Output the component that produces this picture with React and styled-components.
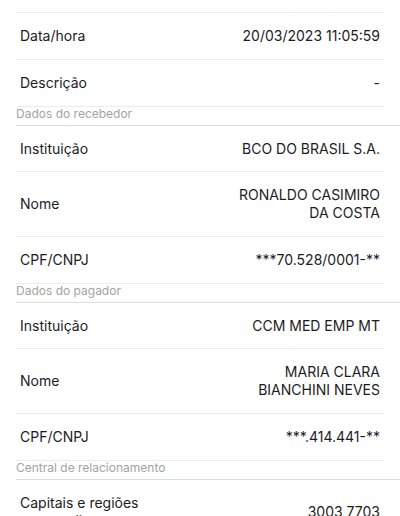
import React from "react";
import styled, { createGlobalStyle } from "styled-components";

const data = [
  {
    rows: [
      { label: "Data/hora", value: ["20/03/2023 11:05:59"] },
      { label: "Descrição", value: ["-"] },
    ],
  },
  {
    title: "Dados do recebedor",
    rows: [
      { label: "Instituição", value: ["BCO DO BRASIL S.A."] },
      { label: "Nome", value: ["RONALDO CASIMIRO", "DA COSTA"] },
      { label: "CPF/CNPJ", value: ["***70.528/0001-**"] },
    ],
  },
  {
    title: "Dados do pagador",
    rows: [
      { label: "Instituição", value: ["CCM MED EMP MT"] },
      { label: "Nome", value: ["MARIA CLARA", "BIANCHINI NEVES"] },
      { label: "CPF/CNPJ", value: ["***.414.441-**"] },
    ],
  },
  {
    title: "Central de relacionamento",
    rows: [
      { label: "Capitais e regiões metropolitanas", value: ["3003 7703"] },
    ],
  },
];

export default function App() {
  return (
    <Page>
      <GlobalStyle />
      <TopEdge />
      {data.map((group, i) => (
        <Group key={i}>
          {group.title && <GroupTitle>{group.title}</GroupTitle>}
          <List $titled={!!group.title}>
            {group.rows.map((row, j) => (
              <Row key={j}>
                <Label>{row.label}</Label>
                <Value>
                  {row.value.map((line, k) => (
                    <span key={k}>{line}</span>
                  ))}
                </Value>
              </Row>
            ))}
          </List>
        </Group>
      ))}
    </Page>
  );
}

const GlobalStyle = createGlobalStyle`
  html, body {
    margin: 0;
    padding: 0;
    background: #ffffff;
    overflow: hidden;
  }
  body {
    font-family: Inter, "Liberation Sans", Arial, sans-serif;
    color: #1c1c1e;
  }
`;

const Page = styled.div`
  width: 400px;
  height: 516px;
  overflow: hidden;
  background: #fff;
`;

const TopEdge = styled.div`
  height: 12px;
  margin: 0 16px;
  border-bottom: 1px solid #ececec;
`;

const Group = styled.section`
  display: flex;
  flex-direction: column;
`;

const GroupTitle = styled.div`
  padding: 0 16px;
  height: 18px;
  font-size: 12px;
  line-height: 13px;
  color: #a3a3a3;
`;

const Row = styled.div`
  display: flex;
  align-items: center;
  justify-content: space-between;
  margin-right: 16px;
  padding: 14px 4px;
  border-bottom: 1px solid #ececec;
  font-size: 14px;
  line-height: 18px;
`;

const List = styled.div`
  display: flex;
  flex-direction: column;
  margin-left: 16px;
  border-top: ${(p) => (p.$titled ? "1px solid #dcdcdc" : "none")};

  & > ${Row}:first-child:not(:last-child) {
    padding-bottom: ${(p) => (p.$titled ? "13px" : "14px")};
  }
`;

const Label = styled.div`
  flex: 0 0 150px;
  max-width: 150px;
`;

const Value = styled.div`
  display: flex;
  flex-direction: column;
  align-items: flex-end;
  text-align: right;
`;
